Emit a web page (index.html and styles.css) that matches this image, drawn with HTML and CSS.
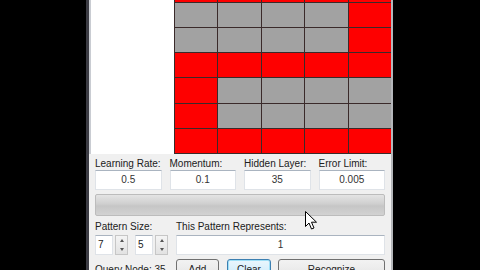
FILE: index.html
```html
<!DOCTYPE html>
<html>
<head>
<meta charset="utf-8">
<link rel="stylesheet" href="styles.css">
</head>
<body>
<div class="screen">
  <div class="side-left"></div>
  <div class="window">
    <div class="top">
      <div class="panel"><span class="tick">'</span></div>
      <div class="grid">
        <div class="c r"></div><div class="c r"></div><div class="c r"></div><div class="c r"></div><div class="c r"></div>
        <div class="c g"></div><div class="c g"></div><div class="c g"></div><div class="c g"></div><div class="c r"></div>
        <div class="c g"></div><div class="c g"></div><div class="c g"></div><div class="c g"></div><div class="c r"></div>
        <div class="c r"></div><div class="c r"></div><div class="c r"></div><div class="c r"></div><div class="c r"></div>
        <div class="c r"></div><div class="c g"></div><div class="c g"></div><div class="c g"></div><div class="c g"></div>
        <div class="c r"></div><div class="c g"></div><div class="c g"></div><div class="c g"></div><div class="c g"></div>
        <div class="c r"></div><div class="c r"></div><div class="c r"></div><div class="c r"></div><div class="c r"></div>
      </div>
    </div>
    <div class="form">
      <div class="fields">
        <div class="field"><div class="label">Learning Rate:</div><div class="box">0.5</div></div>
        <div class="field"><div class="label">Momentum:</div><div class="box">0.1</div></div>
        <div class="field"><div class="label">Hidden Layer:</div><div class="box">35</div></div>
        <div class="field"><div class="label">Error Limit:</div><div class="box">0.005</div></div>
      </div>
      <div class="progress"></div>
      <div class="pattern">
        <div class="psize">
          <div class="label">Pattern Size:</div>
          <div class="spins">
            <div class="spin"><div class="sbox">7</div><div class="sbtn"><span class="up"></span><span class="dn"></span></div></div>
            <div class="spin"><div class="sbox">5</div><div class="sbtn"><span class="up"></span><span class="dn"></span></div></div>
          </div>
        </div>
        <div class="prep">
          <div class="label">This Pattern Represents:</div>
          <div class="box">1</div>
        </div>
      </div>
      <div class="bottom">
        <div class="query">Query Node: 35</div>
        <div class="btn add">Add</div>
        <div class="btn clear">Clear</div>
        <div class="btn recog">Recognize</div>
      </div>
    </div>
  </div>
  <svg class="cursor" width="13" height="20" viewBox="0 0 13 20"><path d="M0.5 0.5 L0.5 15.5 L4 12 L6.5 18 L9 17 L6.5 11.2 L11.5 11.2 Z" fill="#fff" stroke="#000" stroke-width="1"/></svg>
</div>
</body>
</html>
```
FILE: styles.css
```css
html, body {
  margin: 0;
  padding: 0;
  background: #000;
}
.screen {
  position: relative;
  width: 480px;
  height: 270px;
  overflow: hidden;
  display: flex;
  background: #000;
  font-family: "Liberation Sans", Arial, sans-serif;
  font-size: 10px;
  color: #1e1e1e;
}
.side-left {
  width: 86px;
  flex: none;
}
.window {
  width: 300px;
  flex: none;
  border-left: 3px solid #3c3c44;
  padding-left: 2px;
  background: #c9ccd2;
  border-right: 2px solid #b4b6ba;
  display: flex;
  flex-direction: column;
}
.top {
  display: flex;
  height: 154px;
  flex: none;
}
.panel {
  width: 83px;
  background: #fff;
  position: relative;
}
.tick {
  position: absolute;
  left: 4px;
  top: -4px;
  font-size: 9px;
  color: #333;
}
.grid {
  flex: 1;
  display: grid;
  grid-template-columns: repeat(5, 1fr);
  grid-template-rows: 2px repeat(6, 1fr);
  gap: 1px;
  background: #3a2a2a;
  padding-left: 1px;
  padding-bottom: 1px;
}
.c.r { background: #fe0000; }
.c.g { background: #a2a2a2; }
.form {
  flex: 1;
  background: #f0f0f0;
  padding: 3px 6px 0 4px;
  margin-left: -2px;
  padding-left: 6px;
}
.fields {
  display: grid;
  grid-template-columns: repeat(4, 1fr);
  gap: 8px;
}
.label {
  height: 13px;
  line-height: 13px;
  white-space: nowrap;
  color: #202020;
}
.box {
  height: 18px;
  background: #fff;
  border: 1px solid #dfe3e8;
  border-top-color: #aab4c0;
  text-align: center;
  line-height: 18px;
  color: #333;
}
.progress {
  margin-top: 4px;
  height: 20px;
  border: 1px solid #bcbcbc;
  border-radius: 2px;
  background: linear-gradient(#e4e4e4, #cfcfcf 45%, #c6c6c6 55%, #d2d2d2);
}
.pattern {
  margin-top: 4px;
  display: flex;
  gap: 8px;
}
.psize {
  width: 73px;
  flex: none;
}
.spins {
  display: flex;
  gap: 7px;
  margin-top: 2px;
}
.spin {
  display: flex;
  gap: 2px;
  width: 33px;
}
.sbox {
  flex: 1;
  height: 18px;
  background: #fff;
  border: 1px solid #dfe3e8;
  border-top-color: #aab4c0;
  line-height: 18px;
  padding-left: 2px;
  color: #222;
}
.sbtn {
  width: 11px;
  height: 18px;
  border: 1px solid #c6c6c6;
  background: linear-gradient(#f4f4f4, #e2e2e2);
  display: flex;
  flex-direction: column;
  align-items: center;
  justify-content: space-around;
}
.up, .dn {
  width: 0;
  height: 0;
  border-left: 2.5px solid transparent;
  border-right: 2.5px solid transparent;
}
.up { border-bottom: 3px solid #555; }
.dn { border-top: 3px solid #555; }
.prep {
  flex: 1;
}
.prep .box {
  margin-top: 2px;
}
.bottom {
  margin-top: 4px;
  display: flex;
  align-items: flex-start;
}
.query {
  width: 81px;
  flex: none;
  padding-top: 5px;
  white-space: nowrap;
}
.btn {
  height: 21px;
  border: 1px solid #707070;
  border-radius: 3px;
  background: linear-gradient(#f2f2f2, #ebebeb 45%, #dddddd 55%, #cfcfcf);
  text-align: center;
  line-height: 20px;
  color: #222;
}
.add { width: 41px; }
.clear {
  width: 42px;
  margin-left: 8px;
  border-color: #3c7fb1;
  box-shadow: inset 0 0 0 1px #9fe0f7;
  background: linear-gradient(#eaf6fd, #d9f0fc 45%, #bee6fd 55%, #a7d9f5);
}
.recog {
  flex: 1;
  margin-left: 7px;
}
.cursor {
  position: absolute;
  left: 305px;
  top: 211px;
}
```
